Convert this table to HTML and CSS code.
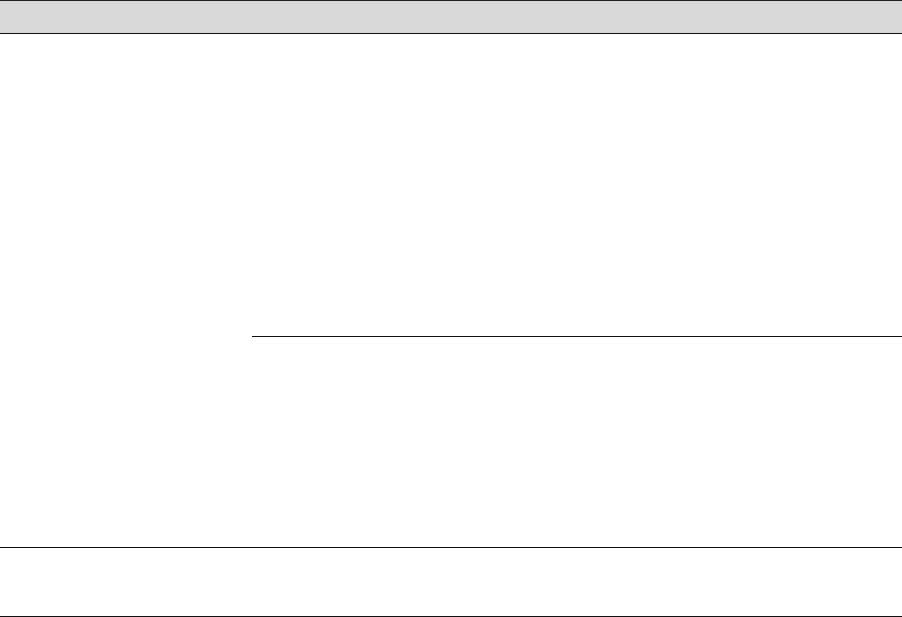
FILE: index.html
```html
<!DOCTYPE html>
<html lang="en">
<head>
    <meta charset="UTF-8">
    <meta name="viewport" content="width=device-width, initial-scale=1.0">
    <title>Layout</title>
    <link rel="stylesheet" href="styles.css">
</head>
<body>
    <div class="page">
        <div class="topbar"></div>
        <div class="main">
            <div class="sidebar"></div>
            <div class="content">
                <div class="content-top"></div>
                <div class="content-bottom"></div>
            </div>
        </div>
        <div class="footer"></div>
    </div>
</body>
</html>
```

FILE: styles.css
```css
body {
    margin: 0;
    padding: 0;
    font-family: 'Liberation Sans', Arial, sans-serif;
    background-color: #fff;
}

.page {
    width: 100%;
    display: flex;
    flex-direction: column;
}

.topbar {
    height: 32px;
    background-color: #d9d9d9;
    border-top: 1px solid #222;
    border-bottom: 1px solid #111;
}

.main {
    display: flex;
    height: 513px;
    border-bottom: 1px solid #111;
}

.sidebar {
    width: 252px;
    flex-shrink: 0;
}

.content {
    flex: 1;
    display: flex;
    flex-direction: column;
}

.content-top {
    height: 302px;
    border-bottom: 1px solid #111;
}

.content-bottom {
    flex: 1;
}

.footer {
    height: 68px;
    border-bottom: 1px solid #111;
}
```
